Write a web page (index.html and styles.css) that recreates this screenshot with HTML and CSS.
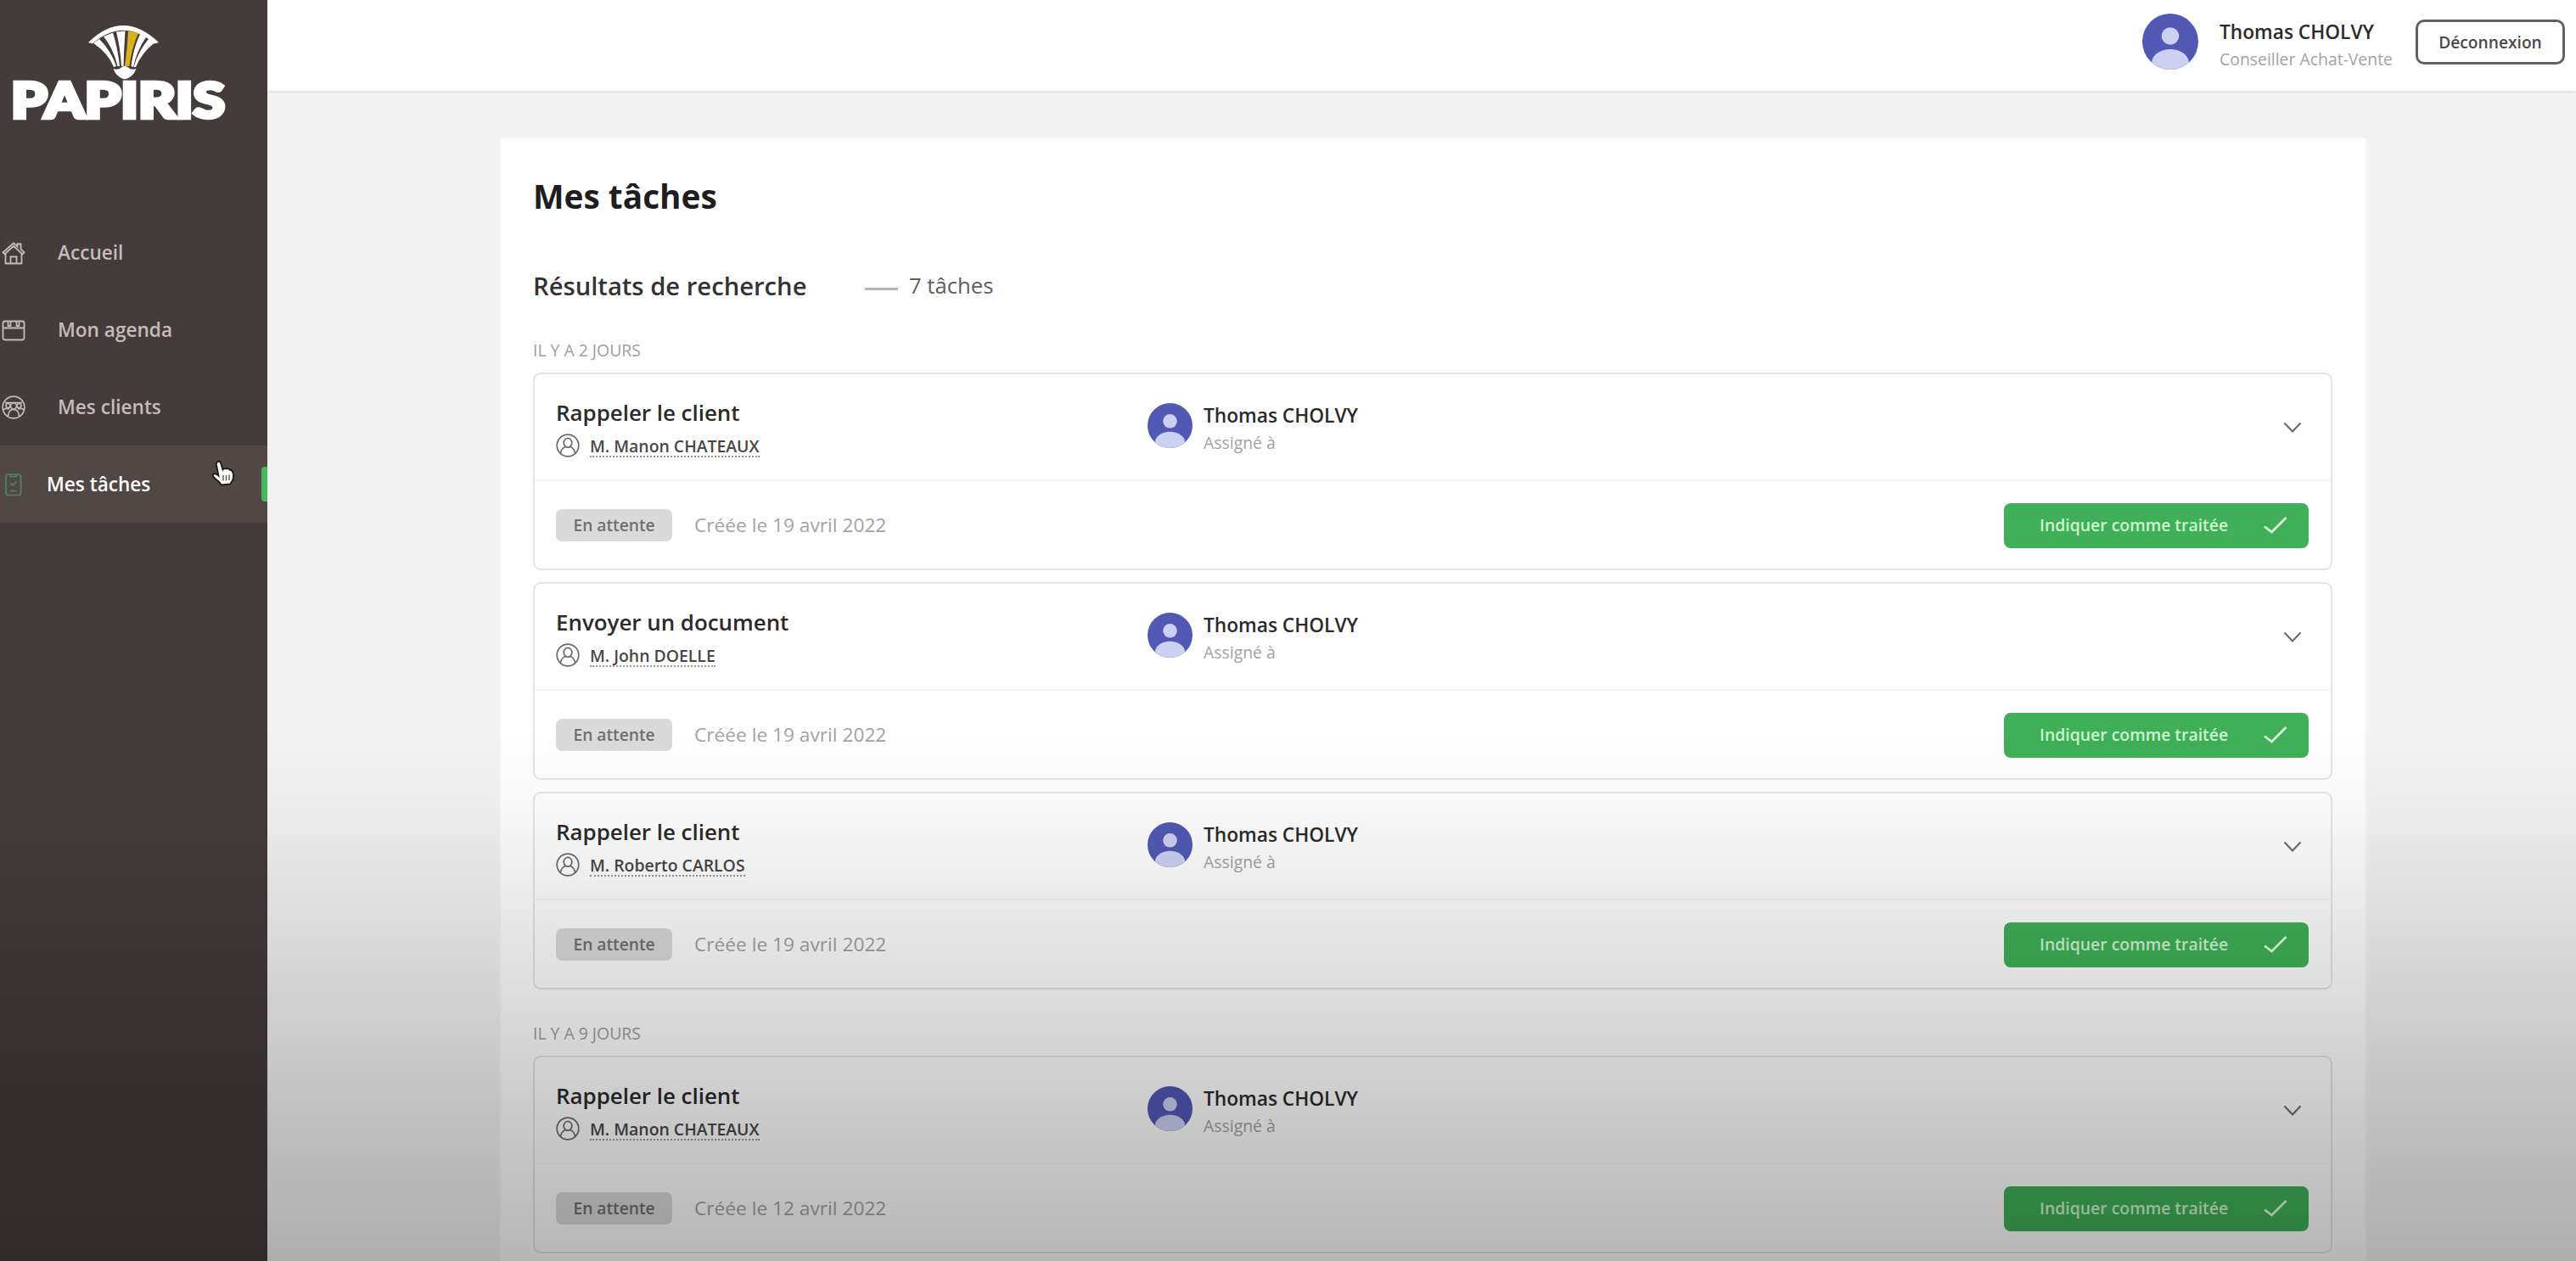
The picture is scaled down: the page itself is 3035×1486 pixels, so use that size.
FILE: index.html
```html
<!DOCTYPE html>
<html lang="fr">
<head>
<meta charset="utf-8">
<title>Papiris - Mes tâches</title>
<link rel="stylesheet" href="styles.css">
</head>
<body>
<svg class="sprite" aria-hidden="true">
  <symbol id="avatar" viewBox="0 0 66 66">
    <clipPath id="disc"><circle cx="33" cy="33" r="33"/></clipPath>
    <g clip-path="url(#disc)">
      <rect width="66" height="66" fill="#5159b4"/>
      <circle cx="33" cy="26.5" r="10.3" fill="#ccd0f3"/>
      <ellipse cx="33" cy="58" rx="22" ry="16" fill="#ccd0f3"/>
    </g>
  </symbol>
  <symbol id="person" viewBox="0 0 28 28">
    <g fill="none" stroke="currentColor" stroke-width="1.7">
      <circle cx="14" cy="14" r="12.8"/>
      <ellipse cx="14" cy="10.8" rx="4.8" ry="5.4"/>
      <path d="M5.4 23.2c.6-4 2.600-6.400 5.900-7.900M22.600 23.200c-.6-4-2.600-6.400-5.900-7.900"/>
    </g>
  </symbol>
  <symbol id="chevron" viewBox="0 0 24 16">
    <path d="M2.500 2.500L12 12.500L21.500 2.500" fill="none" stroke="currentColor" stroke-width="2.200"/>
  </symbol>
  <symbol id="check" viewBox="0 0 30 22">
    <path d="M2 12.500L10.500 19L27.500 2" fill="none" stroke="currentColor" stroke-width="2.800"/>
  </symbol>
</svg>

<div class="app">
  <aside class="sidebar">
    <svg class="logo" width="315" height="160" viewBox="0 0 315 160" role="img" aria-label="Papiris">
      <g fill="#fff">
        <path d="M104 50Q145 10 187 50L182 51.500Q145 20 109 51.500Z"/>
        <path d="M110 51L117 46Q131 60 137 78L134 79Q127 62 110 51Z"/>
        <path d="M122 43L133 38.500Q139 58 141 78L138.500 78Q134 58 122 43Z"/>
        <path d="M137 37.500L147.500 36.500Q146 58 145.500 78L143 78Q142 58 137 37.500Z"/>
        <path d="M165 40L172 44Q161 60 157 79L154.500 78Q157 57 165 40Z"/>
        <path d="M175 46L182 50.500Q167 62 160 79L157.500 79Q163 60 175 46Z"/>
        <path d="M133.500 81Q139 83 143 79.500Q147 76 151 79.500Q155 83 160.500 81Q157 91 147 93.500Q137 91 133.500 81Z"/>
      </g>
      <path d="M151 36.500L163 39Q155 57 152.500 78L147 78Q150 57 151 36.500Z" fill="#d9b21c"/>
      <text class="wordmark" x="13" y="139" textLength="252" lengthAdjust="spacingAndGlyphs">PAPIRIS</text>
    </svg>
    <nav class="nav">
      <a class="nav-item">
        <svg class="nav-icon" viewBox="0 0 28 28"><g fill="none" stroke="currentColor" stroke-width="1.800"><path d="M1.500 13.500L14 2.500L18.500 6.500V3.500H22.500V9.500L26.500 13.500L24.500 15.500L14 6L3.500 15.500Z"/><path d="M4.500 15V26.500H23.500V15M10.500 26.500V18.500H17.500V26.500"/></g></svg>
        <span>Accueil</span>
      </a>
      <a class="nav-item">
        <svg class="nav-icon" viewBox="0 0 28 28"><g fill="none" stroke="currentColor" stroke-width="1.800"><rect x="1.500" y="3.500" width="25" height="22" rx="2.500"/><path d="M1.500 11.500H26.500M7.500 3.500V9H10.500V3.500M17.500 3.500V9H20.500V3.500"/></g></svg>
        <span>Mon agenda</span>
      </a>
      <a class="nav-item">
        <svg class="nav-icon" viewBox="0 0 28 28"><g fill="none" stroke="currentColor" stroke-width="1.700"><circle cx="14" cy="14" r="12.800"/><circle cx="14" cy="12.500" r="3.500"/><circle cx="7.500" cy="12" r="2.500"/><circle cx="20.500" cy="12" r="2.500"/><path d="M7.500 24C8 18.500 10 16.500 14 16.500S20 18.500 20.500 24M2 17Q4.500 14.500 9 16M26 17Q23.500 14.500 19 16M4 8.500H24"/></g></svg>
        <span>Mes clients</span>
      </a>
      <a class="nav-item active">
        <svg class="nav-icon" viewBox="0 0 28 28"><g fill="none" stroke="currentColor" stroke-width="1.700"><rect x="5" y="2" width="17.500" height="24.500" rx="3"/><path d="M10 2.500V4.500H17.500V2.500M10.500 12.500L13 15L17.500 10.500M10 21.500H18"/></g></svg>
        <span>Mes tâches</span>
      </a>
    </nav>
    <svg class="cursor" viewBox="0 0 28 31"><path d="M7.500 2C10 1 11 3 11.500 5L13.500 11.500Q15 9.500 17.500 10.500Q19.500 9.500 21.500 11.500Q24.500 11.500 25.500 15Q27 20 24.500 25L22 28.500L12 29.500Q9.500 25.500 4.500 22Q.5 18.500 2.500 16.500Q5 15.500 8.500 18.500L6 6Q5.500 3 7.500 2Z" fill="#fff" stroke="#1b1717" stroke-width="1.800"/><path d="M14 18V24.500M17.500 18V24.500M21 17.500V24" stroke="#554c4a" stroke-width="1.300"/></svg>
  </aside>

  <div class="main">
    <header class="topbar">
      <svg class="avatar-lg"><use href="#avatar"/></svg>
      <div class="identity">
        <div class="name">Thomas CHOLVY</div>
        <div class="sub">Conseiller Achat-Vente</div>
      </div>
      <button class="logout">Déconnexion</button>
    </header>

    <main class="panel">
      <h1>Mes tâches</h1>
      <div class="results">
        <h2>Résultats de recherche</h2>
        <span class="dash"></span>
        <span class="count">7 tâches</span>
      </div>

      <section class="group">
        <h3>IL Y A 2 JOURS</h3>
        <article class="task">
          <div class="task-head">
            <div class="task-info">
              <div class="task-title">Rappeler le client</div>
              <div class="client"><svg><use href="#person"/></svg><a>M. Manon CHATEAUX</a></div>
            </div>
            <div class="assignee"><svg class="avatar-sm"><use href="#avatar"/></svg><div><div class="name">Thomas CHOLVY</div><div class="sub">Assigné à</div></div></div>
            <svg class="chevron"><use href="#chevron"/></svg>
          </div>
          <div class="task-foot">
            <span class="badge">En attente</span><span class="date">Créée le 19 avril 2022</span>
            <button class="done">Indiquer comme traitée<svg><use href="#check"/></svg></button>
          </div>
        </article>
        <article class="task">
          <div class="task-head">
            <div class="task-info">
              <div class="task-title">Envoyer un document</div>
              <div class="client"><svg><use href="#person"/></svg><a>M. John DOELLE</a></div>
            </div>
            <div class="assignee"><svg class="avatar-sm"><use href="#avatar"/></svg><div><div class="name">Thomas CHOLVY</div><div class="sub">Assigné à</div></div></div>
            <svg class="chevron"><use href="#chevron"/></svg>
          </div>
          <div class="task-foot">
            <span class="badge">En attente</span><span class="date">Créée le 19 avril 2022</span>
            <button class="done">Indiquer comme traitée<svg><use href="#check"/></svg></button>
          </div>
        </article>
        <article class="task">
          <div class="task-head">
            <div class="task-info">
              <div class="task-title">Rappeler le client</div>
              <div class="client"><svg><use href="#person"/></svg><a>M. Roberto CARLOS</a></div>
            </div>
            <div class="assignee"><svg class="avatar-sm"><use href="#avatar"/></svg><div><div class="name">Thomas CHOLVY</div><div class="sub">Assigné à</div></div></div>
            <svg class="chevron"><use href="#chevron"/></svg>
          </div>
          <div class="task-foot">
            <span class="badge">En attente</span><span class="date">Créée le 19 avril 2022</span>
            <button class="done">Indiquer comme traitée<svg><use href="#check"/></svg></button>
          </div>
        </article>
      </section>

      <section class="group">
        <h3>IL Y A 9 JOURS</h3>
        <article class="task">
          <div class="task-head">
            <div class="task-info">
              <div class="task-title">Rappeler le client</div>
              <div class="client"><svg><use href="#person"/></svg><a>M. Manon CHATEAUX</a></div>
            </div>
            <div class="assignee"><svg class="avatar-sm"><use href="#avatar"/></svg><div><div class="name">Thomas CHOLVY</div><div class="sub">Assigné à</div></div></div>
            <svg class="chevron"><use href="#chevron"/></svg>
          </div>
          <div class="task-foot">
            <span class="badge">En attente</span><span class="date">Créée le 12 avril 2022</span>
            <button class="done">Indiquer comme traitée<svg><use href="#check"/></svg></button>
          </div>
        </article>
      </section>
    </main>
  </div>
</div>
<div class="shade"></div>
</body>
</html>
```
FILE: styles.css
```css
* { box-sizing: border-box; }

body {
  margin: 0;
  height: 1486px;
  overflow: hidden;
  font-family: "Open Sans", "Noto Sans", sans-serif;
  color: #2b2b2b;
  background: #f2f2f2;
}

h1, h2, h3 { margin: 0; }
svg { display: block; flex: none; }
button { font-family: inherit; }

.sprite { position: absolute; width: 0; height: 0; }

.app { display: flex; height: 1486px; }

/* Sidebar */
.sidebar {
  position: relative;
  flex: none;
  width: 315px;
  background: #443b3b;
}
.wordmark {
  font-family: Lato, sans-serif;
  font-weight: 900;
  font-size: 57px;
  fill: #fff;
  stroke: #fff;
  stroke-width: 4.500px;
}
.nav { margin-top: 92px; }
.nav-item {
  display: flex;
  align-items: center;
  gap: 38px;
  height: 91px;
  padding-left: 2px;
  font-size: 22.6px;
  font-weight: 600;
  line-height: 30px;
  color: #c4bcbc;
}
.nav-icon { width: 28px; height: 28px; }
.nav-item.active {
  position: relative;
  gap: 25px;
  color: #fff;
  background: #514845;
}
.nav-item.active .nav-icon { color: #4d8658; }
.nav-item.active::after {
  content: "";
  position: absolute;
  right: 0;
  top: 25px;
  width: 7px;
  height: 41px;
  border-radius: 4px 0 0 4px;
  background: #45b85b;
}
.cursor {
  position: absolute;
  left: 249px;
  top: 542px;
  width: 28px;
  height: 31px;
}

/* Top bar */
.main { flex: 1; display: flex; flex-direction: column; }
.topbar {
  flex: none;
  display: flex;
  justify-content: flex-end;
  align-items: flex-start;
  height: 107px;
  padding: 16px 13px 0 0;
  background: #fff;
  box-shadow: 0 1px 3px rgba(0, 0, 0, .1);
}
.avatar-lg { width: 66px; height: 66px; margin-right: 25px; }
.identity { width: 231px; margin-top: 7px; }
.name { font-size: 22.7px; font-weight: 600; line-height: 30px; white-space: nowrap; }
.sub { font-size: 19.4px; line-height: 26px; color: #a3a3a3; white-space: nowrap; }
.topbar .sub { margin-top: 4px; }
.logout {
  width: 176px;
  height: 53px;
  margin-top: 7px;
  padding: 0;
  border: 3px solid #626262;
  border-radius: 10px;
  background: #fff;
  color: #4a4a4a;
  font-size: 19.2px;
  font-weight: 600;
  line-height: 26px;
}

/* Content panel */
.panel {
  width: 2197px;
  flex: 1;
  margin: 56px 0 0 275px;
  padding: 42px 39px 0 38px;
  background: #fefefe;
  box-shadow: 0 0 6px rgba(255, 255, 255, .8);
}
h1 { font-size: 38.8px; line-height: 52px; font-weight: 700; color: #1e1e1e; }
.results { display: flex; align-items: center; margin-top: 60px; height: 40px; }
h2 { width: 391px; font-size: 29.2px; line-height: 40px; font-weight: 600; color: #333; }
.dash { width: 39px; height: 3px; margin: 6px 13px 0 0; background: #b4b4b4; }
.count { font-size: 25.7px; line-height: 40px; color: #606060; }

.group { margin-top: 42px; }
.group + .group { margin-top: 38px; }
h3 {
  height: 28px;
  margin-bottom: 12px;
  font-size: 19.4px;
  line-height: 28px;
  font-weight: 400;
  color: #a0a0a0;
}

/* Task card */
.task {
  height: 233px;
  border: 2px solid #e4e4e4;
  border-radius: 9px;
}
.task + .task { margin-top: 14px; }
.task-head {
  display: flex;
  align-items: flex-start;
  height: 126px;
  padding: 27px 24px 0 25px;
  border-bottom: 2px solid #f6f6f6;
}
.task-info { width: 697px; }
.task-title { font-size: 25.9px; line-height: 36px; font-weight: 600; color: #2b2b2b; }
.client { display: flex; align-items: center; gap: 12px; margin-top: 7px; }
.client svg { width: 28px; height: 28px; color: #6c6c6c; }
.client a {
  height: 27px;
  font-size: 19.4px;
  line-height: 27px;
  font-weight: 600;
  color: #484848;
  border-bottom: 2px dotted #999;
}
.assignee { display: flex; gap: 13px; margin-top: 7px; }
.assignee .sub { margin-top: 4px; }
.avatar-sm { width: 53px; height: 53px; }
.chevron { width: 24px; height: 16px; margin: 28px 9px 0 auto; color: #6c6c6c; }

.task-foot {
  display: flex;
  align-items: center;
  height: 104px;
  padding: 0 26px 0 25px;
}
.badge {
  width: 137px;
  height: 38px;
  border-radius: 7px;
  background: #dadada;
  color: #707070;
  font-size: 19.2px;
  line-height: 38px;
  font-weight: 600;
  text-align: center;
}
.date { margin-left: 26px; font-size: 22.7px; line-height: 30px; color: #a3a3a3; }
.done {
  display: flex;
  align-items: center;
  width: 359px;
  height: 53px;
  margin-left: auto;
  padding: 0 24px 0 42px;
  border: 0;
  border-radius: 8px;
  background: #3fb057;
  color: #cdf5d0;
  font-size: 19.4px;
  line-height: 26px;
  font-weight: 600;
  white-space: nowrap;
}
.done svg { width: 30px; height: 22px; margin-left: auto; color: #dcffdc; }

/* Darkening toward the bottom of the screen */
.shade {
  position: fixed;
  inset: 860px 0 0 0;
  pointer-events: none;
  background: linear-gradient(to bottom, rgba(0,0,0,0) 0%, rgba(0,0,0,.02) 14%, rgba(0,0,0,.11) 43%, rgba(0,0,0,.205) 72%, rgba(0,0,0,.28) 100%);
}
```
